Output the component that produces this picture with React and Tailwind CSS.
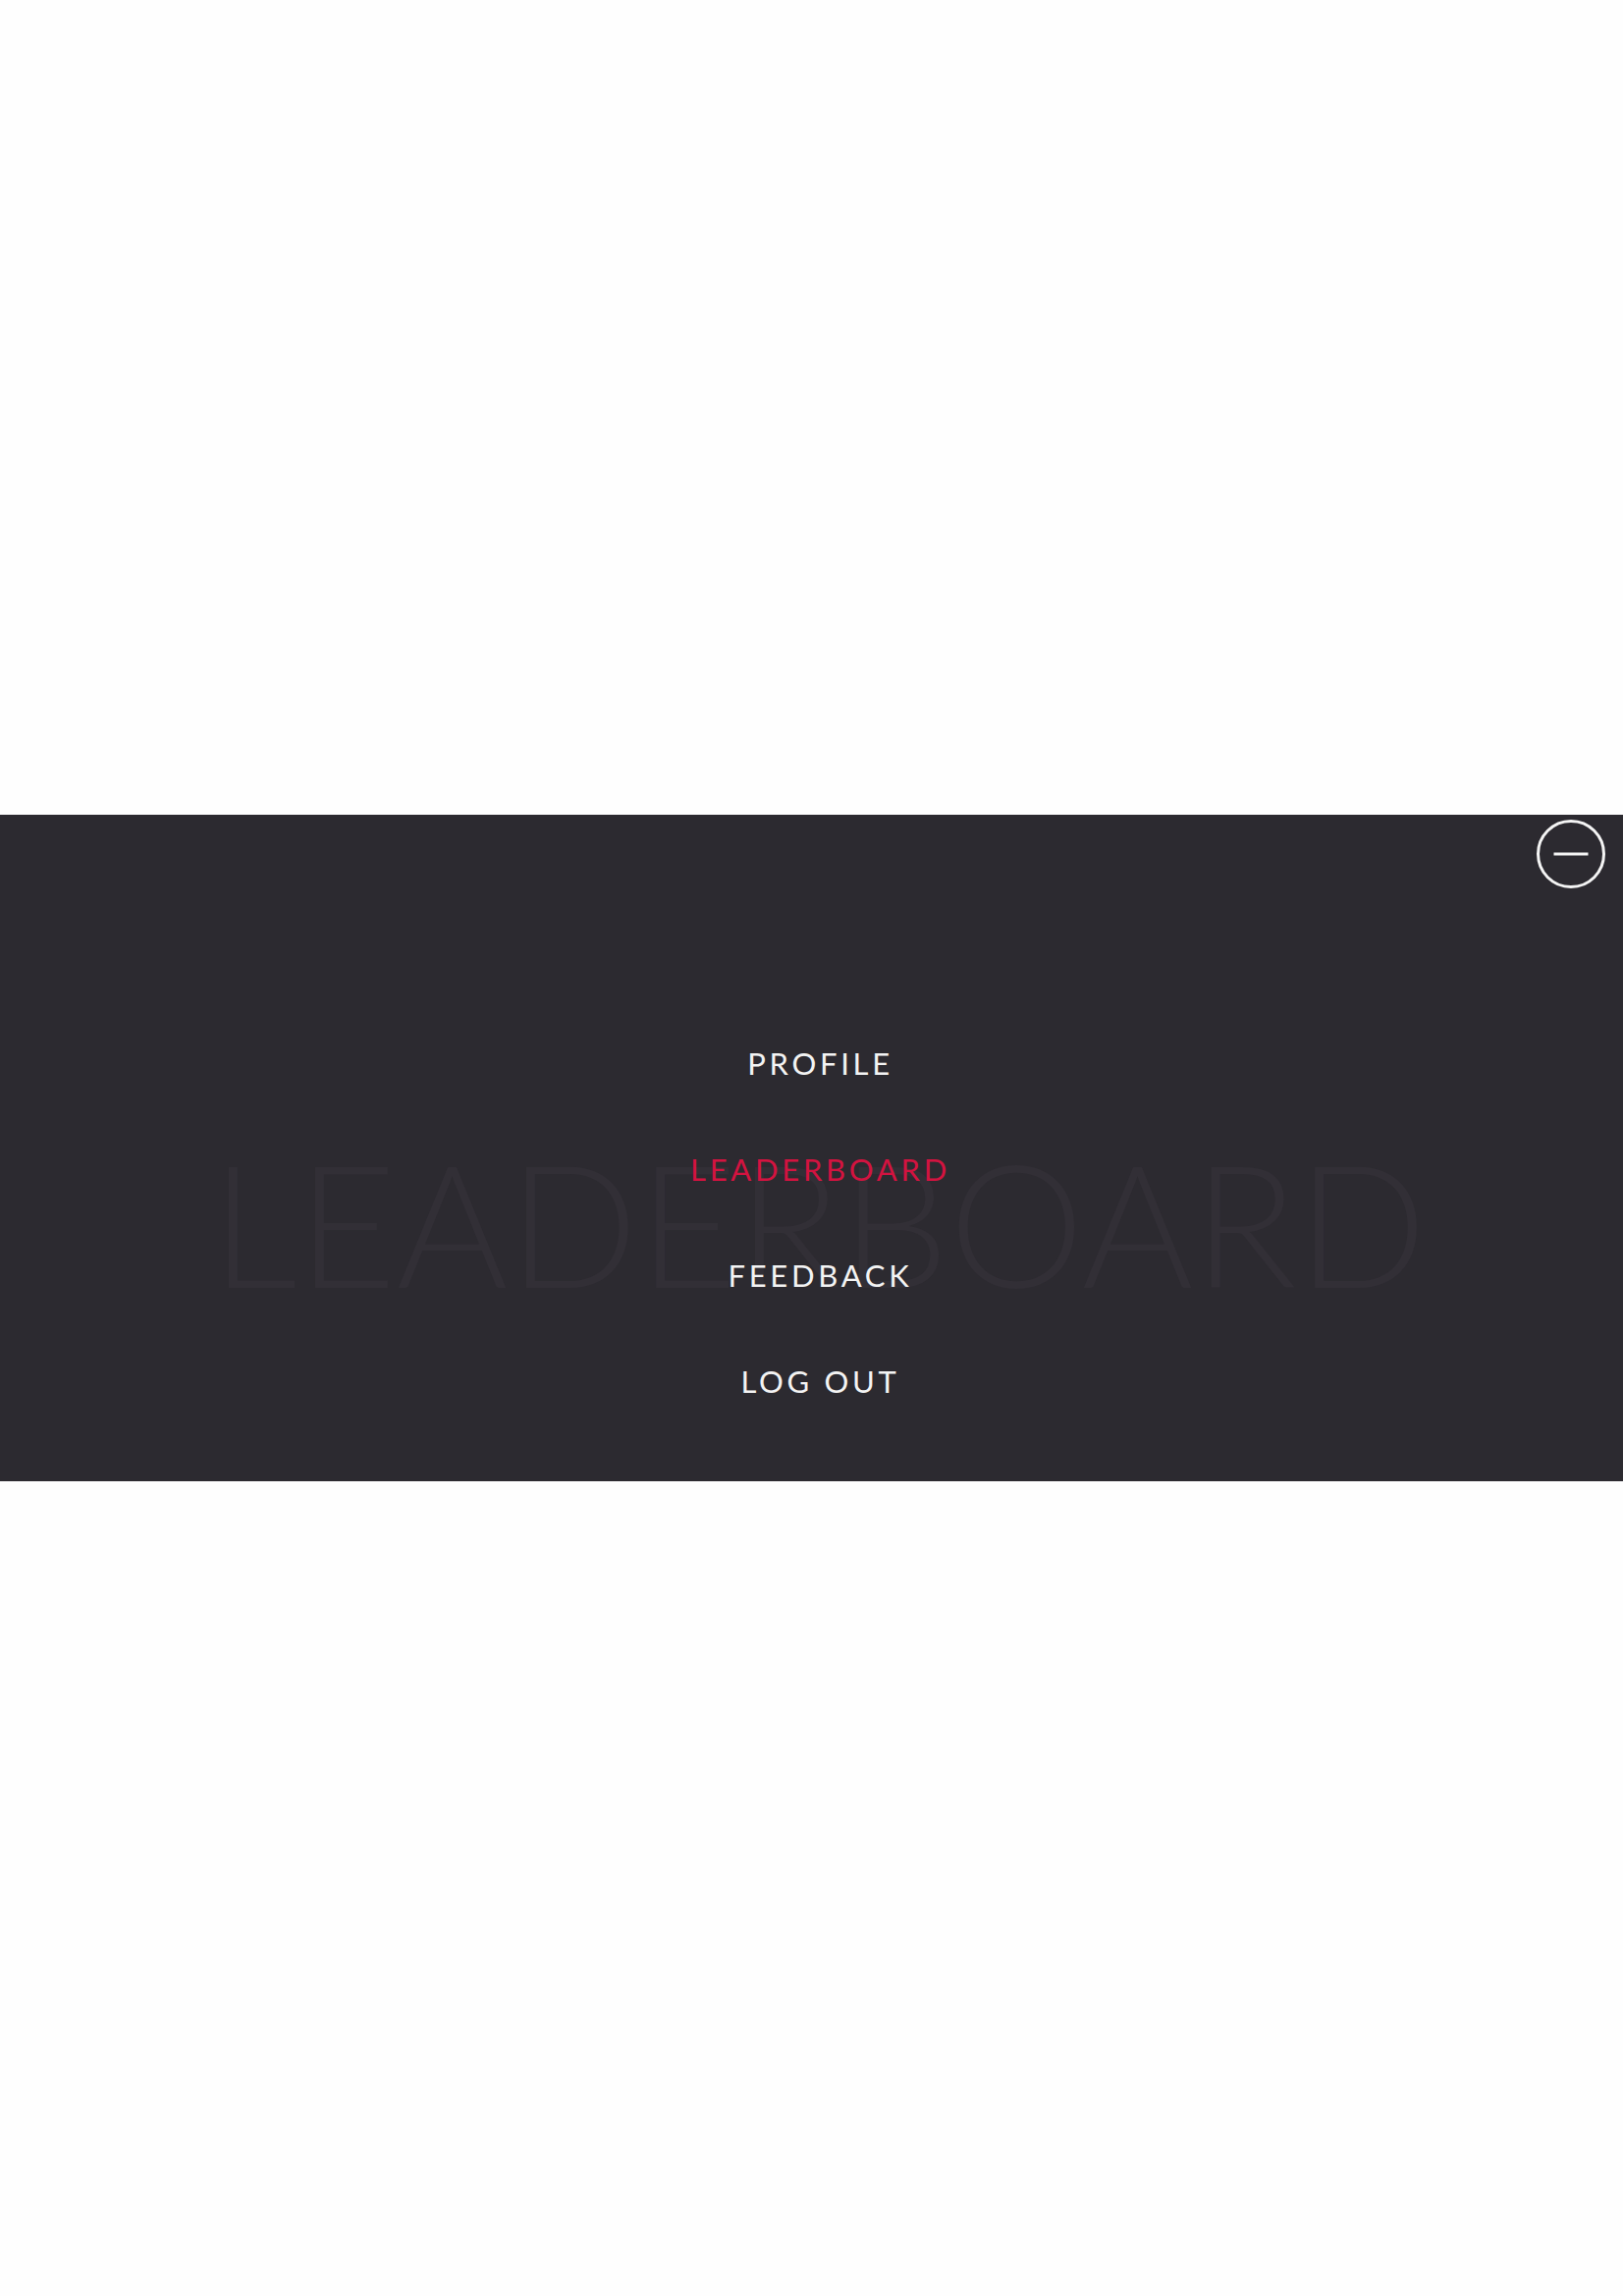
import React from 'react';

const items = [
  { label: 'PROFILE', active: false },
  { label: 'LEADERBOARD', active: true },
  { label: 'FEEDBACK', active: false },
  { label: 'LOG OUT', active: false },
];

const CloseIcon = () => (
  <svg width="72" height="72" viewBox="0 0 72 72" fill="none">
    <circle cx="36" cy="36" r="33.5" stroke="#f4f4f4" strokeWidth="3" />
    <line x1="18.5" y1="36" x2="53.5" y2="36" stroke="#f4f4f4" strokeWidth="3" />
  </svg>
);

export default function App() {
  return (
    <div className="h-[2339px] bg-[#fefefe] flex items-center" style={{ fontFamily: "'Lato', 'Noto Sans', sans-serif" }}>
      <div className="relative w-full h-[679px] bg-[#2c2a30] flex flex-col">
        {/* big ghost word behind the menu */}
        <div className="absolute inset-0 pl-[15px] flex items-center justify-center pt-[150px] pointer-events-none select-none">
          <span className="text-[174px] leading-none font-light text-[#322f36]">LEADERBOARD</span>
        </div>

        <div className="relative flex justify-end pt-[4px] pr-[17px] h-[80px]">
          <button className="w-[72px] h-[72px]">
            <CloseIcon />
          </button>
        </div>

        <nav className="relative mt-[119px] pl-[18px] flex flex-col">
          {items.map(it => (
            <a
              key={it.label}
              href="#"
              className={`h-[108px] flex items-center justify-center text-[31px] tracking-[0.12em] ${it.active ? 'text-[#d31340]' : 'text-[#f3f3f3]'}`}
            >
              {it.label}
            </a>
          ))}
        </nav>
      </div>
    </div>
  );
}
